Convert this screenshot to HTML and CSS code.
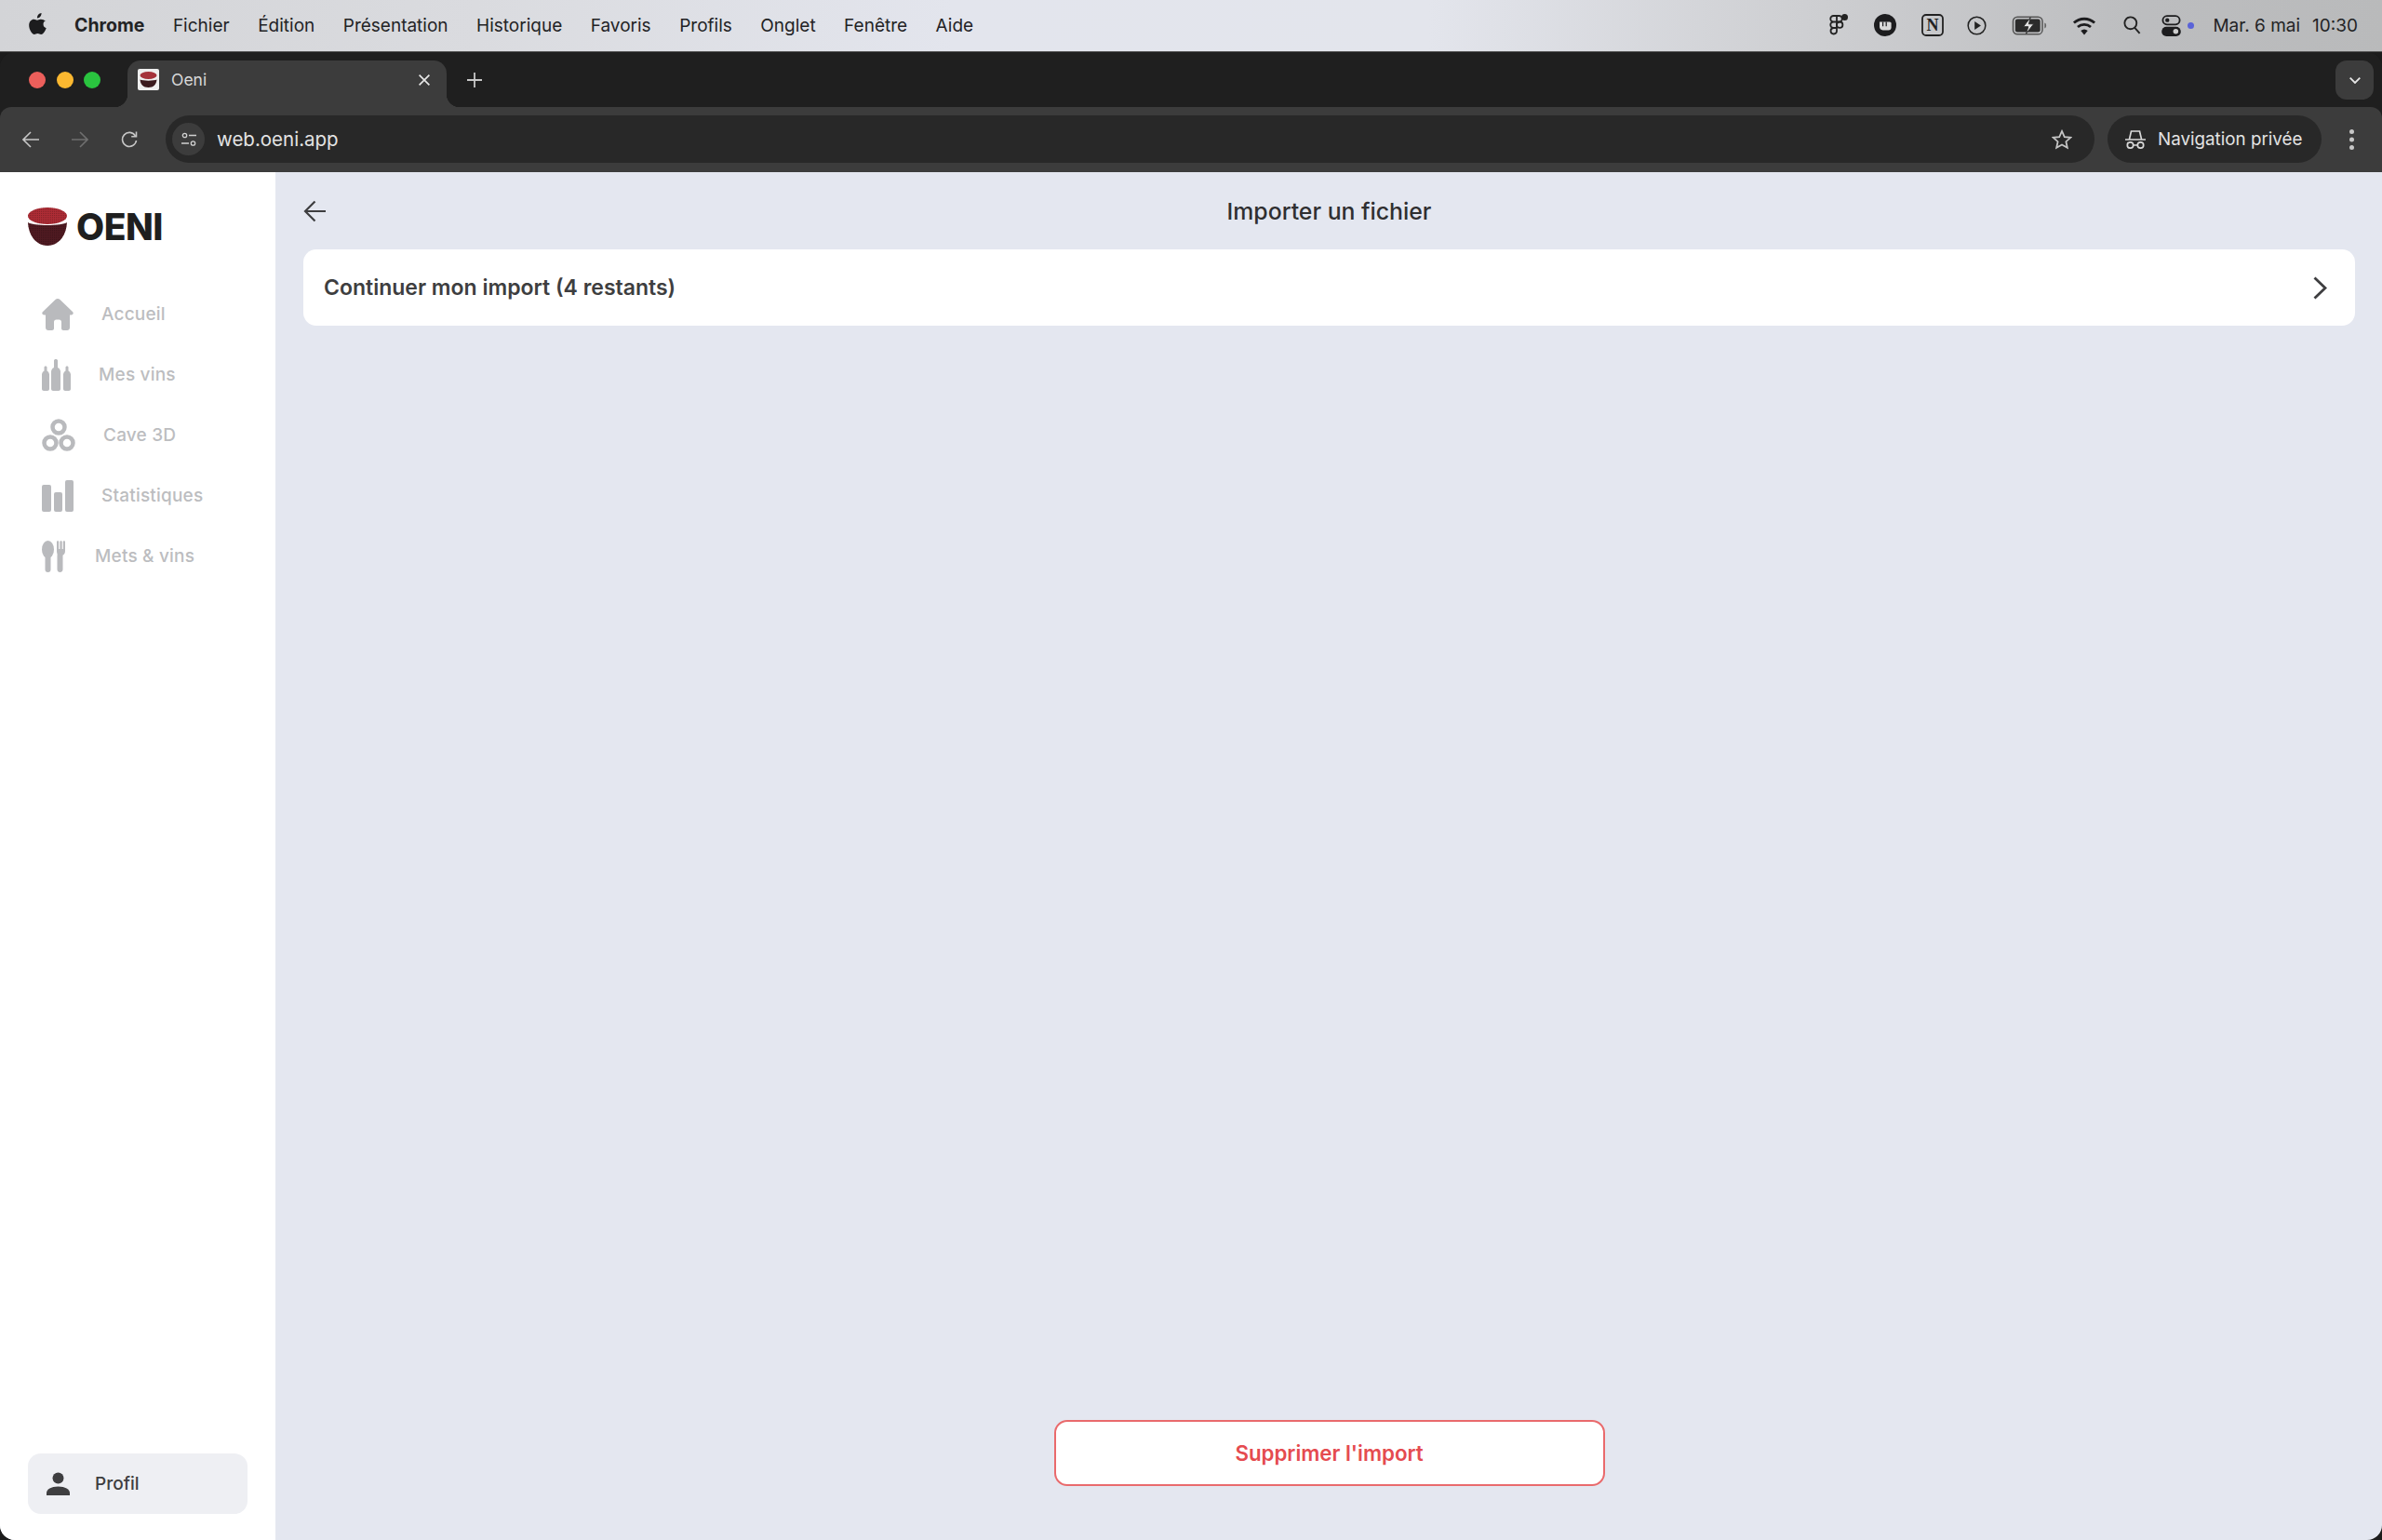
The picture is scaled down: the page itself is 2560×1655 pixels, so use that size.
FILE: index.html
```html
<!DOCTYPE html>
<html lang="fr">
<head>
  <meta charset="UTF-8" />
  <title>Oeni</title>
  <link rel="stylesheet" href="styles.css">
</head>
<body>
  <div class="menubar">
    <div class="menu-left">
      <svg class="apple" viewBox="0 0 17 21" width="19" height="23"><path d="M12.200 0c.1 1.300-.4 2.500-1.100 3.400-.8.900-1.900 1.600-3.100 1.500-.1-1.200.4-2.500 1.100-3.300C9.900.7 11.200.1 12.200 0zM16.300 7.200c-1.500.9-2.300 2.100-2.300 3.700 0 1.900 1.100 3.200 2.900 3.900-.4 1.200-1 2.400-1.800 3.600-1 1.500-2 2.500-3.300 2.500-1.300 0-1.700-.8-3.300-.8-1.600 0-2.100.8-3.300.8-1.300 0-2.300-1.100-3.300-2.600C.6 16.400 0 14 0 11.900c0-3.700 2.400-5.800 4.800-5.800 1.300 0 2.400.9 3.200.9.800 0 2-.9 3.500-.9 1.900 0 3.500.8 4.800 2.100z" fill="#1c1c1e"/></svg>
      <span class="menu-item menu-strong">Chrome</span>
      <span class="menu-item">Fichier</span>
      <span class="menu-item">Édition</span>
      <span class="menu-item">Présentation</span>
      <span class="menu-item">Historique</span>
      <span class="menu-item">Favoris</span>
      <span class="menu-item">Profils</span>
      <span class="menu-item">Onglet</span>
      <span class="menu-item">Fenêtre</span>
      <span class="menu-item">Aide</span>
    </div>
    <div class="menu-right">
      <svg class="st-figma" viewBox="0 0 20 24" width="20" height="24" fill="none" stroke="#222" stroke-width="1.800"><path d="M4.500 2h3.500v6.500H4.500a3.250 3.250 0 0 1 0-6.500zM4.500 8.500h3.500V15H4.500a3.250 3.250 0 0 1 0-6.500zM8 15v3.500A3.250 3.250 0 1 1 4.500 15H8zM8 2h2.500a3.250 3.250 0 0 1 0 6.500H8z"/><circle cx="11.200" cy="11.700" r="3.200"/><circle cx="16.500" cy="3.500" r="3.500" fill="#222" stroke="none"/></svg>
      <svg class="st-fist" viewBox="0 0 20 20" width="24" height="24"><circle cx="10" cy="10" r="10" fill="#1c1c1e"/><path d="M5 7h9c1 0 1.500.6 1.500 1.500V12c0 1.500-1 2.500-2.500 2.500H8C6 14.500 5 13 5 11.500z" fill="#d8d8d8"/><path d="M8 7v4M11 7v4" stroke="#1c1c1e" stroke-width="1"/></svg>
      <svg class="st-notion" viewBox="0 0 24 24" width="24" height="24"><rect x="1" y="1" width="22" height="22" rx="4" fill="none" stroke="#222" stroke-width="1.800"/><text x="12" y="18" text-anchor="middle" class="st-notion-n">N</text></svg>
      <svg class="st-play" viewBox="0 0 18 18" width="21" height="21"><circle cx="9" cy="9" r="8" fill="none" stroke="#222" stroke-width="1.300"/><path d="M7 5.200 12.800 9 7 12.800z" fill="#222"/></svg>
      <svg class="st-battery" viewBox="0 0 32 18" width="38" height="21"><rect x="1" y="1" width="27" height="16" rx="4" fill="none" stroke="#555" stroke-width="1.300"/><rect x="3" y="3" width="23" height="12" rx="2" fill="#2b2b2b"/><path d="M30 6.500c1.200.4 1.500 1.200 1.500 2.500s-.3 2.100-1.500 2.500z" fill="#666"/><path d="M17 1.500 10.500 10H15l-2 6.500 7-9h-4.500z" fill="#e4e4e4" stroke="#2b2b2b" stroke-width=".8"/></svg>
      <svg class="st-wifi" viewBox="0 0 22 18" width="26" height="21" fill="none" stroke="#1c1c1e" stroke-width="2.400"><path d="M1.500 6.500a14 14 0 0 1 19 0M5 10.300a9 9 0 0 1 12 0"/><path d="M11 17.500 7.800 13.800a5 5 0 0 1 6.400 0z" fill="#1c1c1e" stroke="none"/></svg>
      <svg class="st-search" viewBox="0 0 17 18" width="19" height="20" fill="none" stroke="#222" stroke-width="1.700"><circle cx="7" cy="7" r="5.800"/><path d="M11 11.500 15.800 17"/></svg>
      <div class="st-control">
        <svg viewBox="0 0 17 19" width="21" height="23"><rect x="1" y="1" width="15" height="7.500" rx="3.700" fill="none" stroke="#1c1c1e" stroke-width="1.500"/><circle cx="5" cy="4.700" r="1.800" fill="#1c1c1e"/><rect y="10.500" width="17" height="8.500" rx="4.200" fill="#1c1c1e"/><circle cx="12.500" cy="14.700" r="2.300" fill="#ccc"/></svg>
        <span class="st-dot"></span>
      </div>
      <span class="menu-item menu-date">Mar. 6 mai</span>
      <span class="menu-item menu-time">10:30</span>
    </div>
  </div>

  <div class="window">
    <div class="tabstrip">
      <div class="lights">
        <span class="light red"></span>
        <span class="light yellow"></span>
        <span class="light green"></span>
      </div>
      <div class="tab">
        <svg class="favicon" viewBox="0 0 23 23" width="23" height="23"><rect width="23" height="23" rx="2" fill="#efefef"/><ellipse cx="11.500" cy="7" rx="9" ry="4" fill="#a5323a"/><path d="M2.500 11.500c2.500 1.500 15.500 1.500 18 0-.4 5-3.500 8.500-9 8.500s-8.600-3.500-9-8.500z" fill="#3b1a1e"/></svg>
        <span class="tab-title">Oeni</span>
        <svg class="tab-close" viewBox="0 0 12 12" width="12" height="12" stroke="#e6e6e6" stroke-width="1.700"><path d="M.6.600l10.800 10.800M11.400.600.600 11.400"/></svg>
      </div>
      <svg class="tab-new" viewBox="0 0 16 16" width="16" height="16" stroke="#c8c8c8" stroke-width="1.800"><path d="M8 0v16M0 8h16"/></svg>
      <div class="tab-list">
        <svg viewBox="0 0 12 7" width="12" height="7" fill="none" stroke="#e6e6e6" stroke-width="1.800"><path d="M.7.700 6 6 11.300.7"/></svg>
      </div>
    </div>

    <div class="toolbar">
      <div class="tool-nav">
        <svg viewBox="0 0 18 18" width="18" height="18" fill="none" stroke="#c6c6c6" stroke-width="1.600"><path d="M18 9H1.500M9 1 1 9l8 8"/></svg>
        <svg viewBox="0 0 18 18" width="18" height="18" fill="none" stroke="#6f6f6f" stroke-width="1.600"><path d="M0 9h16.500M9 1l8 8-8 8"/></svg>
        <svg viewBox="0 0 18 18" width="18" height="18" fill="none" stroke="#c6c6c6" stroke-width="1.600"><path d="M15.500 5A7.500 7.500 0 1 0 16.500 10"/><path d="M16.500.5V5.800H11.200"/></svg>
      </div>
      <div class="omnibox">
        <div class="site-icon">
          <svg viewBox="0 0 16 16" width="16" height="16" fill="none" stroke="#d0d0d0" stroke-width="1.300"><circle cx="3.500" cy="3.500" r="2.200"/><path d="M8 3.500h8M0 12h8"/><circle cx="12.500" cy="12" r="2.200"/></svg>
        </div>
        <span class="omni-url">web.oeni.app</span>
        <svg class="omni-star" viewBox="0 0 20 20" width="22" height="22" fill="none" stroke="#c6c6c6" stroke-width="1.600"><path d="M10 1.800l2.500 5.600 6 .6-4.500 4 1.300 6L10 15l-5.300 3 1.300-6-4.500-4 6-.6z"/></svg>
      </div>
      <div class="incognito">
        <svg viewBox="0 0 22 22" width="22" height="22" fill="none" stroke="#d8d8d8" stroke-width="1.700"><path d="M0 11h22M4.500 10.500 6.500 2h9l2 8.500"/><circle cx="5.500" cy="17" r="3.200"/><circle cx="16.500" cy="17" r="3.200"/><path d="M8.700 17h4.600"/></svg>
        <span>Navigation privée</span>
      </div>
      <svg class="tool-more" viewBox="0 0 5 22" width="5" height="22" fill="#c6c6c6"><circle cx="2.500" cy="2.500" r="2.500"/><circle cx="2.500" cy="11" r="2.500"/><circle cx="2.500" cy="19.500" r="2.500"/></svg>
    </div>

    <div class="app">
      <aside class="sidebar">
        <div class="logo">
          <svg viewBox="0 0 42 41" width="42" height="41">
            <defs>
              <pattern id="speck" width="2" height="2" patternUnits="userSpaceOnUse"><rect width="1" height="1" fill="#000" fill-opacity=".22"/></pattern>
            </defs>
            <ellipse cx="21" cy="9" rx="21" ry="9" fill="#ad2c35"/>
            <ellipse cx="21" cy="9" rx="21" ry="9" fill="url(#speck)"/>
            <path d="M0 16c5 4 37 4 42 0-.5 14-9 25-21 25S.5 30 0 16z" fill="#4f1a21"/>
            <path d="M0 16c5 4 37 4 42 0-.5 14-9 25-21 25S.5 30 0 16z" fill="url(#speck)"/>
          </svg>
          <span class="logo-text">OENI</span>
        </div>
        <nav class="nav">
          <a class="nav-item">
            <svg viewBox="0 0 34 34" width="34" height="34" fill="#b9babd"><path d="M17 0c1 0 1.800.4 2.500 1L33 14c1.300 1.300.8 3.500-1.500 3.500H30V31c0 1.700-1.300 3-3 3h-4c-1 0-2-1-2-2v-7c0-1.500-1-2.500-2.500-2.500h-3C14 22.500 13 23.500 13 25v7c0 1-1 2-2 2H7c-1.700 0-3-1.300-3-3V17.500H2.500C.2 17.500-.3 15.300 1 14L14.500 1c.7-.6 1.500-1 2.500-1z"/></svg>
            <span>Accueil</span>
          </a>
          <a class="nav-item">
            <svg viewBox="0 0 31 34" width="31" height="34" fill="#b9babd"><path d="M2.500 8.500c0-1.500 3-1.500 3 0v4c1.500 1 2.500 2.500 2.500 4V32c0 1.200-1 2-2 2H2c-1 0-2-.8-2-2V16.500c0-1.500 1-3 2.500-4zM13 1.500c0-2 4-2 4 0v7.500c2 1 3 2.700 3 4.500V32c0 1.200-1 2-2 2h-6c-1 0-2-.8-2-2V13.500c0-1.800 1-3.500 3-4.500zM25.500 8.500c0-1.500 3-1.500 3 0v4c1.500 1 2.500 2.500 2.500 4V32c0 1.200-1 2-2 2h-4c-1 0-2-.8-2-2V16.500c0-1.500 1-3 2.500-4z"/></svg>
            <span>Mes vins</span>
          </a>
          <a class="nav-item">
            <svg viewBox="0 0 36 36" width="36" height="36" fill="none" stroke="#b9babd" stroke-width="4.500"><circle cx="18" cy="9" r="6.500"/><circle cx="9" cy="26" r="6.500"/><circle cx="27" cy="26" r="6.500"/></svg>
            <span>Cave 3D</span>
          </a>
          <a class="nav-item">
            <svg viewBox="0 0 34 34" width="34" height="34" fill="#b9babd"><rect y="5" width="10" height="29" rx="2"/><rect x="13" y="13" width="9" height="21" rx="2"/><rect x="25" width="9" height="34" rx="2"/></svg>
            <span>Statistiques</span>
          </a>
          <a class="nav-item">
            <svg viewBox="0 0 27 34" width="27" height="34" fill="#b9babd"><ellipse cx="6.500" cy="9.500" rx="6.500" ry="9.500"/><rect x="3.500" y="12" width="6" height="22" rx="3"/><path d="M16 1c0-1 2.200-1 2.200 0v8h1.200V1c0-1 2.300-1 2.300 0v8h1.100V1c0-1 2.200-1 2.200 0v10c0 2.500-1 4-2.500 4.800V31c0 4-6 4-6 0V15.800C17 15 16 13.500 16 11z"/></svg>
            <span>Mets &amp; vins</span>
          </a>
        </nav>
        <a class="profile">
          <svg viewBox="0 0 25 25" width="25" height="25" fill="#3e3e40"><circle cx="12.500" cy="6.500" r="6"/><path d="M0 25v-2.500c0-4 5-7 12.500-7s12.500 3 12.500 7V25z"/></svg>
          <span>Profil</span>
        </a>
      </aside>

      <main class="main">
        <header class="page-head">
          <svg class="back" viewBox="0 0 24 24" width="24" height="24" fill="none" stroke="#3e3e40" stroke-width="2.200"><path d="M24 12H2M12.500 1.500 2 12l10.500 10.500"/></svg>
          <h1 class="page-title">Importer un fichier</h1>
        </header>
        <div class="resume-card">
          <span>Continuer mon import (4 restants)</span>
          <svg viewBox="0 0 15 25" width="15" height="25" fill="none" stroke="#3e3e40" stroke-width="2.800"><path d="M1.500 1.500 13 12.500 1.500 23.500"/></svg>
        </div>
        <button class="delete-btn">Supprimer l'import</button>
      </main>
    </div>
  </div>
</body>
</html>
```

FILE: styles.css
```css
* {
  box-sizing: border-box;
}

html, body {
  height: 100%;
}

body {
  margin: 0;
  display: flex;
  flex-direction: column;
  font-family: Inter, "Liberation Sans", sans-serif;
  background: #1c1c1c;
  overflow: hidden;
}

svg {
  display: block;
  flex-shrink: 0;
}

/* mac menu bar */
.menubar {
  height: 56px;
  flex-shrink: 0;
  display: flex;
  align-items: center;
  justify-content: space-between;
  padding: 0 26px 1px 31px;
  background: linear-gradient(90deg, #d3d4d7 0%, #dadbdf 20%, #e3e5ed 40%, #e3e5ec 60%, #cfd0d3 75%, #bcbdbf 90%, #b9babb 100%);
  border-bottom: 1px solid #555;
}

.menu-left,
.menu-right {
  display: flex;
  align-items: center;
}

.apple {
  margin-right: 30px;
  margin-top: -3px;
}

.menu-item {
  font-size: 19px;
  color: #232325;
  margin-right: 30.500px;
  white-space: nowrap;
}

.menu-strong {
  font-weight: 700;
  font-size: 19.500px;
}

.st-figma { margin-right: 28px; }
.st-fist { margin-right: 27px; }
.st-notion { margin-right: 25px; }
.st-play { margin-right: 27px; }
.st-battery { margin-right: 27px; }
.st-wifi { margin-right: 29px; }
.st-search { margin-right: 22px; }

.st-notion-n {
  font-family: "Liberation Serif", serif;
  font-size: 18px;
  font-weight: 700;
  fill: #222;
}

.st-control {
  display: flex;
  align-items: center;
  gap: 7px;
  margin-right: 20px;
}

.st-dot {
  width: 7px;
  height: 7px;
  border-radius: 50%;
  background: #5a63d8;
}

.menu-date {
  margin-right: 13px;
}

.menu-time {
  margin-right: 0;
}

/* browser window */
.window {
  flex: 1;
  min-height: 0;
  display: flex;
  flex-direction: column;
  border-radius: 16px;
  overflow: hidden;
  background: #1f1f1f;
}

.tabstrip {
  height: 59px;
  flex-shrink: 0;
  display: flex;
  align-items: flex-end;
  padding-left: 31px;
  background: #1f1f1f;
}

.lights {
  display: flex;
  gap: 11.500px;
  align-self: flex-start;
  margin-top: 21px;
  width: 106px;
}

.light {
  width: 18px;
  height: 18px;
  border-radius: 50%;
}

.light.red { background: #ec5f5b; }
.light.yellow { background: #fbb830; }
.light.green { background: #2ac43f; }

.tab {
  width: 343px;
  height: 50px;
  display: flex;
  align-items: center;
  padding: 0 18px 9px 11px;
  background: #3c3c3c;
  border-radius: 14px 14px 0 0;
  position: relative;
}

/* flared bottom corners of the active tab */
.tab::before,
.tab::after {
  content: "";
  position: absolute;
  bottom: 0;
  width: 14px;
  height: 14px;
}

.tab::before {
  left: -14px;
  background: radial-gradient(circle at 0 0, transparent 14px, #3c3c3c 14.500px);
}

.tab::after {
  right: -14px;
  background: radial-gradient(circle at 100% 0, transparent 14px, #3c3c3c 14.500px);
}

.tab-title {
  flex: 1;
  margin-left: 13px;
  font-size: 17.500px;
  color: #d8d8d8;
}

.tab-new {
  margin: 0 0 21px 22px;
}

.tab-list {
  width: 41px;
  height: 42px;
  margin: 0 9px 8px auto;
  border-radius: 12px;
  background: #3c3c3c;
  display: flex;
  align-items: center;
  justify-content: center;
}

.toolbar {
  height: 70px;
  flex-shrink: 0;
  display: flex;
  align-items: center;
  padding: 0 0 1px 24px;
  background: #3c3c3c;
  border-radius: 12px 12px 0 0;
}

.tool-nav {
  display: flex;
  gap: 35px;
  width: 154px;
}

.omnibox {
  width: 2073px;
  height: 51px;
  display: flex;
  align-items: center;
  padding: 0 24px 0 7px;
  border-radius: 26px;
  background: #282828;
}

.site-icon {
  width: 35px;
  height: 35px;
  border-radius: 50%;
  background: #3c3c3c;
  display: flex;
  align-items: center;
  justify-content: center;
}

.omni-url {
  flex: 1;
  margin-left: 13px;
  font-size: 20.500px;
  color: #e3e3e3;
}

.incognito {
  width: 230px;
  height: 51px;
  margin-left: 14px;
  display: flex;
  align-items: center;
  gap: 13px;
  padding-left: 19px;
  border-radius: 26px;
  background: #282828;
  font-size: 18.800px;
  color: #e3e3e3;
  white-space: nowrap;
}

.tool-more {
  margin-left: 30px;
}

/* app */
.app {
  flex: 1;
  min-height: 0;
  display: flex;
  background: #e4e7f0;
}

.sidebar {
  width: 296px;
  flex-shrink: 0;
  display: flex;
  flex-direction: column;
  padding: 38px 30px 28px;
  background: white;
}

.logo {
  display: flex;
  align-items: center;
  gap: 10px;
}

.logo-text {
  font-size: 39px;
  line-height: 40px;
  font-weight: 800;
  color: #1f1f1f;
  letter-spacing: -0.5px;
}

.nav {
  display: flex;
  flex-direction: column;
  margin-top: 41px;
  padding-left: 15px;
}

.nav-item {
  height: 65px;
  display: flex;
  align-items: center;
  gap: 30px;
  font-size: 19px;
  font-weight: 500;
  letter-spacing: 0.2px;
  color: #bcbdc0;
}

.profile {
  height: 65px;
  margin-top: auto;
  display: flex;
  align-items: center;
  gap: 27px;
  padding-left: 20px;
  border-radius: 14px;
  background: #eeeff3;
  font-size: 19px;
  font-weight: 500;
  color: #3e3e40;
}

.main {
  flex: 1;
  display: flex;
  flex-direction: column;
  padding: 27px 29px 58px 30px;
}

.page-head {
  height: 30px;
  display: flex;
  align-items: center;
  justify-content: center;
  position: relative;
}

.back {
  position: absolute;
  left: 0;
  top: 3px;
}

.page-title {
  margin: 0;
  font-size: 24.800px;
  font-weight: 500;
  color: #2f2f31;
}

.resume-card {
  height: 82px;
  margin-top: 26px;
  display: flex;
  align-items: center;
  justify-content: space-between;
  padding: 0 30px 0 22px;
  border-radius: 14px;
  background: white;
  font-size: 23px;
  font-weight: 600;
  color: #3e3e40;
}

.delete-btn {
  width: 592px;
  height: 71px;
  margin: auto auto 0;
  border: 2px solid #e96a6c;
  border-radius: 14px;
  background: white;
  font-family: inherit;
  font-size: 22.300px;
  font-weight: 600;
  color: #e54b4f;
}
```
